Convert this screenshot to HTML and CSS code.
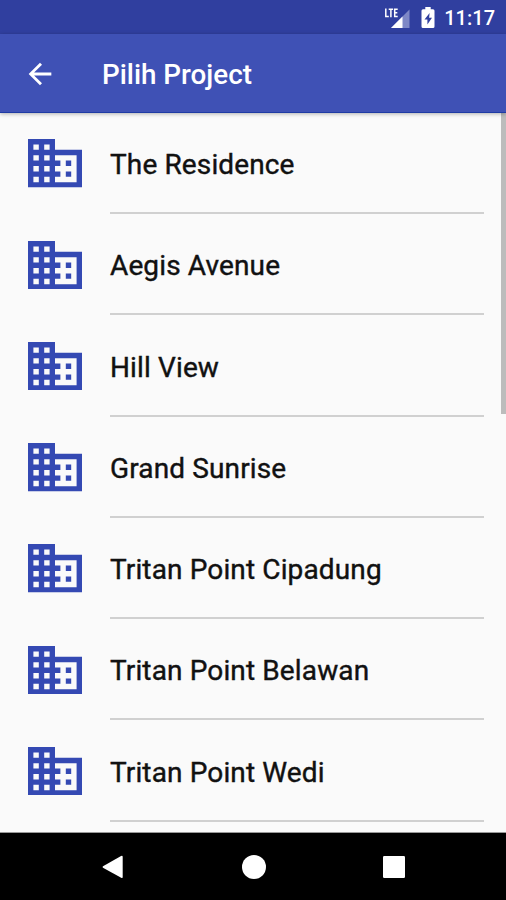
FILE: index.html
```html
<!DOCTYPE html>
<html lang="id">
<head>
<meta charset="utf-8">
<title>Pilih Project</title>
<link rel="stylesheet" href="styles.css">
</head>
<body>
<svg class="defs" width="0" height="0"><symbol id="business" viewBox="2 3 20 18"><path d="M12 7V3H2v18h20V7H12zM6 19H4v-2h2v2zm0-4H4v-2h2v2zm0-4H4V9h2v2zm0-4H4V5h2v2zm4 12H8v-2h2v2zm0-4H8v-2h2v2zm0-4H8V9h2v2zm0-4H8V5h2v2zm10 12h-8v-2h2v-2h-2v-2h2v-2h-2V9h8v10zm-2-8h-2v2h2v-2zm0 4h-2v2h2v-2z"/></symbol></svg>
<div class="screen">
  <div class="status">
    <svg class="signal" width="27" height="24" viewBox="0 0 27 24"><path class="faint" d="M25.500 3.500V22H7z"/><path class="solid" d="M18.500 10.500V22H7z"/><path class="lte" d="M1.800 2.500v8h3M4.700 3.300h4.400M6.900 3.300v7.900M13.700 3.300h-3v7.200h3M10.700 6.800h2.600"/></svg>
    <svg class="battery" width="14" height="22" viewBox="0 0 14 22"><path class="solid" d="M4.300 0h5.400v2.200H12a1.500 1.500 0 0 1 1.500 1.500v15.800A1.500 1.500 0 0 1 12 21H2a1.500 1.500 0 0 1-1.500-1.500V3.700A1.500 1.500 0 0 1 2 2.200h2.300z"/><path class="bolt" d="M8.600 6L3.500 12.500h2.900V17.500l4.600-6.700H8.100z"/></svg>
    <span class="time">11:17</span>
  </div>
  <header class="bar">
    <svg class="back" width="34" height="34" viewBox="0 0 24 24"><path d="M20 11H7.830l5.590-5.590L12 4l-8 8 8 8 1.410-1.410L7.830 13H20v-2z"/></svg>
    <h1>Pilih Project</h1>
  </header>
  <main class="content">
    <ul class="list">
      <li><svg class="icon"><use href="#business"/></svg><span>The Residence</span></li>
      <li><svg class="icon"><use href="#business"/></svg><span>Aegis Avenue</span></li>
      <li><svg class="icon"><use href="#business"/></svg><span>Hill View</span></li>
      <li><svg class="icon"><use href="#business"/></svg><span>Grand Sunrise</span></li>
      <li><svg class="icon"><use href="#business"/></svg><span>Tritan Point Cipadung</span></li>
      <li><svg class="icon"><use href="#business"/></svg><span>Tritan Point Belawan</span></li>
      <li><svg class="icon"><use href="#business"/></svg><span>Tritan Point Wedi</span></li>
    </ul>
    <div class="scrollbar"></div>
  </main>
  <nav class="nav">
    <svg width="22" height="24" viewBox="0 0 24 26"><path d="M1.100 12.100L20.800 1.100Q22.600 .3 22.600 2V24Q22.600 25.500 20.900 24.700L1.100 13.900Q0 13 1.100 12.100z"/></svg>
    <svg width="24" height="24" viewBox="0 0 24 24"><circle cx="12" cy="12" r="12"/></svg>
    <svg width="22" height="22" viewBox="0 0 22 22"><rect width="22" height="22" rx="1.200"/></svg>
  </nav>
</div>
</body>
</html>
```
FILE: styles.css
```css
* { box-sizing: border-box; }
body { margin: 0; font-family: Roboto, sans-serif; background: #fafafa; }
.defs { position: absolute; }
.screen { width: 506px; height: 900px; display: flex; flex-direction: column; overflow: hidden; }
.status { height: 34px; flex: none; background: #303f9f; color: #fff; display: flex; align-items: center; padding-right: 11px; justify-content: flex-end; }
.signal { margin: 1px 10px 0 0; }
.battery { margin: 1px 9px 0 0; }
.faint { fill: #7e88c6; }
.solid { fill: #fff; }
.lte { fill: none; stroke: #fff; stroke-width: 1.5; }
.bolt { fill: #303f9f; }
.time { font-size: 20px; font-weight: 500; line-height: 34px; padding-top: 2px; }
.bar { height: 79px; flex: none; background: #3f51b5; border-bottom: 1px solid #1f3ba4; display: flex; align-items: center; padding-left: 23px; box-shadow: 0 1px 4px rgba(0,0,0,.3); z-index: 1; }
.back { fill: #fff; margin-top: 1px; }
.bar h1 { margin: 4px 0 0 45px; color: #fff; font-size: 27.800px; font-weight: 500; line-height: 36px; }
.content { flex: 1; min-height: 0; display: flex; justify-content: space-between; background: #fafafa; border-bottom: 1px solid #999; }
.list { list-style: none; margin: 0; padding: 0 0 0 28px; width: 484px; }
.list li { height: 101.250px; display: flex; align-items: flex-start; }
.icon { width: 54px; height: 48.600px; margin: 26.300px 28px 0 0; fill: #3449b3; flex: none; }
.list span { flex: 1; height: 101.200px; border-bottom: 2px solid #d0d0d0; line-height: 103.500px; font-size: 28px; letter-spacing: .13px; -webkit-text-stroke: .4px #111; color: #111; white-space: nowrap; }
.scrollbar { width: 5px; height: 301px; background: #bcbcbc; }
.nav { height: 67px; flex: none; background: #000; display: flex; align-items: center; justify-content: space-between; padding: 0 101px 0 102px; }
.nav svg { fill: #fff; }
```
